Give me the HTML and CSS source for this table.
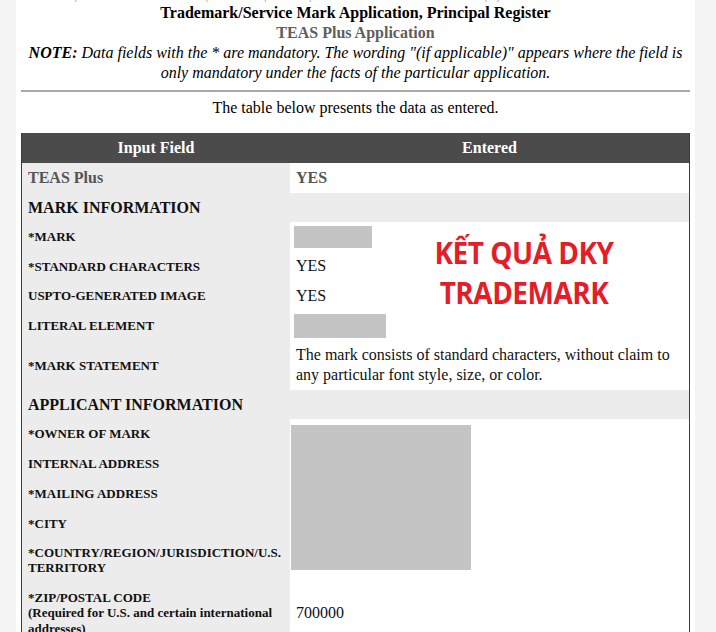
FILE: index.html
```html
<!DOCTYPE html>
<html>
<head>
<meta charset="utf-8">
<link rel="stylesheet" href="styles.css">
</head>
<body>
<div class="page">
  <p class="omb">Under the Paperwork Reduction Act of 1995 no persons are required to respond to a collection of information unless it displays a valid OMB control number.</p>
  <div class="head">
    <div class="title">Trademark/Service Mark Application, Principal Register</div>
    <div class="subtitle">TEAS Plus Application</div>
    <div class="note"><b>NOTE:</b> Data fields with the * are mandatory. The wording "(if applicable)" appears where the field is only mandatory under the facts of the particular application.</div>
  </div>
  <hr class="rule">
  <div class="intro">The table below presents the data as entered.</div>
  <table class="data">
    <thead>
      <tr><th class="c1">Input Field</th><th class="c2">Entered</th></tr>
    </thead>
    <tbody>
      <tr class="teas"><td class="lbl">TEAS Plus</td><td class="val">YES</td></tr>
      <tr class="sec"><td colspan="2">MARK INFORMATION</td></tr>
      <tr><td class="lbl">*MARK</td><td class="val"><div class="redact r-mark"></div></td></tr>
      <tr><td class="lbl">*STANDARD CHARACTERS</td><td class="val">YES</td></tr>
      <tr><td class="lbl">USPTO-GENERATED IMAGE</td><td class="val">YES</td></tr>
      <tr><td class="lbl">LITERAL ELEMENT</td><td class="val"><div class="redact r-lit"></div></td></tr>
      <tr><td class="lbl">*MARK STATEMENT</td><td class="val">The mark consists of standard characters, without claim to any particular font style, size, or color.</td></tr>
      <tr class="sec"><td colspan="2">APPLICANT INFORMATION</td></tr>
      <tr><td class="lbl">*OWNER OF MARK</td><td class="val span" rowspan="5"><div class="redact r-big"></div></td></tr>
      <tr><td class="lbl">INTERNAL ADDRESS</td></tr>
      <tr><td class="lbl">*MAILING ADDRESS</td></tr>
      <tr><td class="lbl">*CITY</td></tr>
      <tr><td class="lbl">*COUNTRY/REGION/JURISDICTION/U.S. TERRITORY</td></tr>
      <tr><td class="lbl zip">*ZIP/POSTAL CODE<br>(Required for U.S. and certain international addresses)</td><td class="val">700000</td></tr>
    </tbody>
  </table>
  <div class="stamp">KẾT QUẢ DKY<br>TRADEMARK</div>
</div>
</body>
</html>
```
FILE: styles.css
```css
html, body {
  margin: 0;
  padding: 0;
  background: #f3f3f3;
  height: 632px;
  overflow: hidden;
}
.page {
  position: relative;
  margin-left: 16px;
  width: 679px;
  height: 700px;
  background: #ffffff;
  font-family: "Liberation Serif", "Times New Roman", serif;
  color: #000;
}
.omb {
  margin: 0;
  position: absolute;
  top: -9px;
  left: 8px;
  font-family: "Liberation Sans", Arial, sans-serif;
  font-size: 8.6px;
  line-height: 12px;
  color: #9a9a9a;
  white-space: nowrap;
}
.head {
  padding-top: 3px;
  text-align: center;
  font-size: 16px;
  line-height: 20px;
}
.title {
  font-weight: bold;
}
.subtitle {
  font-weight: bold;
  color: #5e5e5e;
}
.note {
  font-style: italic;
  padding: 0 6px;
}
.rule {
  margin: 7px 5px 0 5px;
  border: 0;
  height: 2px;
  background: #a9a9a9;
}
.intro {
  text-align: center;
  font-size: 16px;
  line-height: 20px;
  margin-top: 6px;
}
.data {
  margin: 15px 0 0 5px;
  width: 669px;
  border-collapse: collapse;
  border-left: 1px solid #3c3c3c;
  border-right: 1px solid #3c3c3c;
  table-layout: fixed;
}
.data th {
  background: #4b4b4b;
  color: #fff;
  font-size: 16px;
  font-weight: bold;
  height: 30px;
  padding: 0;
  text-align: center;
}
.data .c1 { width: 268px; }
.data td {
  padding: 0;
}
.data .lbl {
  background: #ececec;
  font-size: 13px;
  font-weight: bold;
  line-height: 15px;
  padding: 7.35px 8px 7.35px 6px;
  vertical-align: middle;
  color: #111;
}
.data .lbl.zip {
  line-height: 15.5px;
}
.data .val {
  background: #fff;
  font-size: 16px;
  line-height: 20px;
  padding: 4.85px 6px;
  vertical-align: middle;
  color: #111;
}
.data .val.span {
  vertical-align: top;
  padding-top: 6px;
}
.teas .lbl, .teas .val {
  color: #555;
  font-size: 16px;
  font-weight: bold;
}
.sec td {
  background: #ececec;
  font-size: 16px;
  font-weight: bold;
  line-height: 16px;
  padding: 7px 7px 6px 6px;
  color: #111;
}
.redact {
  background: #c4c4c4;
}
.r-mark {
  width: 78px;
  height: 22px;
  margin: -1px 0 -1px -2px;
}
.r-lit {
  width: 92px;
  height: 24px;
  margin: -2px 0 -2px -2px;
}
.r-big {
  width: 180px;
  height: 145px;
  margin-left: -5px;
}
.stamp {
  position: absolute;
  left: 408px;
  top: 236px;
  width: 200px;
  text-align: center;
  font-family: "Open Sans", "Noto Sans", sans-serif;
  font-weight: bold;
  font-size: 28px;
  letter-spacing: -0.5px;
  line-height: 37px;
  color: #e31e29;
  transform: scaleY(1.08);
}
```
